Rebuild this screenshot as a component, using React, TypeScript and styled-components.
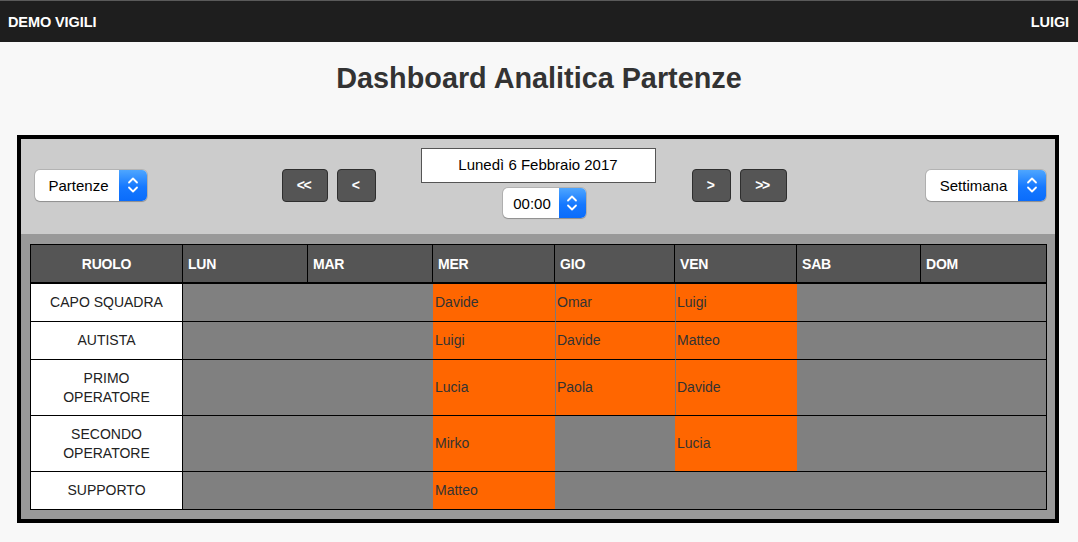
import React from "react";
import styled, { createGlobalStyle } from "styled-components";

const Global = createGlobalStyle`
  html, body { margin: 0; padding: 0; }
  body {
    background: #f8f8f8;
    font-family: "Liberation Sans", Arial, Helvetica, sans-serif;
    color: #333;
  }
`;

const TopBar = styled.header`
  height: 41px;
  background: #1e1e1e;
  border-top: 1px solid #5a5a5a;
  display: flex;
  align-items: center;
  justify-content: space-between;
  padding: 0 9px 0 8px;
`;

const Brand = styled.span`
  color: #fff;
  font-weight: bold;
  font-size: 14.5px;
  letter-spacing: -0.1px;
`;

const Title = styled.h1`
  margin: 0;
  padding: 19px 0 0;
  height: 58px;
  box-sizing: border-box;
  text-align: center;
  font-size: 28.8px;
  line-height: 34px;
  font-weight: bold;
  color: #333;
`;

const Frame = styled.section`
  margin: 35px 19px 0 17px;
  border: 4px solid #000;
  background: #999;
`;

const Toolbar = styled.div`
  background: #cccccc;
  height: 95px;
  box-sizing: border-box;
  display: grid;
  grid-template-columns: 1fr auto 1fr;
  align-items: center;
  padding: 10px 9px 16px 14px;
`;

const Side = styled.div<{ $end?: boolean }>`
  display: flex;
  justify-content: ${(p) => (p.$end ? "flex-end" : "flex-start")};
  margin-top: 3px;
`;

const SelectBox = styled.div<{ $w: number; $h: number; $shift?: number }>`
  width: ${(p) => p.$w}px;
  height: ${(p) => p.$h}px;
  margin-left: ${(p) => p.$shift ?? 0}px;
  box-sizing: border-box;
  display: flex;
  border-radius: 5px;
  background: #fff;
  box-shadow: 0 0 0 1px rgba(0, 0, 0, 0.12), 0 1px 1px rgba(0, 0, 0, 0.2);
  overflow: hidden;
`;

const SelectLabel = styled.span`
  flex: 1;
  display: flex;
  align-items: center;
  justify-content: center;
  font-size: 15px;
  color: #000;
  padding-left: 3px;
`;

const SelectArrow = styled.span<{ $w: number }>`
  width: ${(p) => p.$w}px;
  display: flex;
  align-items: center;
  justify-content: center;
  background: linear-gradient(#4ea6ff, #1578ff 55%, #0a6cfb);
`;

const Chevrons = () => (
  <svg width="12" height="20" viewBox="0 0 12 20">
    <path d="M2 7.5 L6 3.5 L10 7.5" fill="none" stroke="#fff" strokeWidth="1.8" strokeLinecap="round" strokeLinejoin="round" />
    <path d="M2 12.5 L6 16.5 L10 12.5" fill="none" stroke="#fff" strokeWidth="1.8" strokeLinecap="round" strokeLinejoin="round" />
  </svg>
);

const Select = ({
  label,
  w,
  h,
  arrow,
  shift,
}: {
  label: string;
  w: number;
  h: number;
  arrow: number;
  shift?: number;
}) => (
  <SelectBox $w={w} $h={h} $shift={shift}>
    <SelectLabel>{label}</SelectLabel>
    <SelectArrow $w={arrow}>
      <Chevrons />
    </SelectArrow>
  </SelectBox>
);

const Center = styled.div`
  display: flex;
  align-items: center;
  margin-right: 13px;
`;

const NavGroup = styled.div<{ $mr?: number; $ml?: number }>`
  display: flex;
  gap: 9px;
  margin-right: ${(p) => p.$mr ?? 0}px;
  margin-left: ${(p) => p.$ml ?? 0}px;
  margin-top: 3px;
`;

const NavButton = styled.button<{ $w: number }>`
  width: ${(p) => p.$w}px;
  height: 33px;
  background: #555;
  border: 1px solid #2e2e2e;
  border-radius: 4px;
  color: #fff;
  font-family: "Liberation Sans", Arial, sans-serif;
  font-weight: bold;
  font-size: 14px;
  letter-spacing: -1.5px;
  padding: 0 2px 0 0;
  display: flex;
  align-items: center;
  justify-content: center;
`;

const DateCol = styled.div`
  display: flex;
  flex-direction: column;
  align-items: center;
  gap: 5px;
  margin-top: -1px;
`;

const DateBox = styled.div`
  width: 235px;
  height: 35px;
  box-sizing: border-box;
  border: 1px solid #555;
  background: #fff;
  display: flex;
  align-items: center;
  justify-content: center;
  font-size: 15px;
  color: #000;
  padding-bottom: 3px;
`;

const TableArea = styled.div`
  padding: 10px 8px 9px 9px;
`;

const Grid = styled.table`
  width: 1017px;
  border-collapse: separate;
  border-spacing: 0;
  table-layout: fixed;
  border: 1px solid #000;
  background: #808080;
`;

const Head = styled.th<{ $center?: boolean; $last?: boolean }>`
  background: #555;
  color: #fff;
  font-size: 14px;
  font-weight: bold;
  text-align: ${(p) => (p.$center ? "center" : "left")};
  padding: 11px 5px 10px;
  line-height: 16px;
  border-right: ${(p) => (p.$last ? "none" : "1px solid #000")};
  border-bottom: 2px solid #000;
  letter-spacing: -0.2px;
`;

const Row = styled.tr<{ $first: boolean; $h: number }>`
  height: ${(p) => p.$h}px;
  & > td {
    border-top: ${(p) => (p.$first ? "none" : "1px solid #000")};
  }
`;

const RoleCell = styled.td`
  background: #fff;
  color: #222;
  text-align: center;
  font-size: 14px;
  line-height: 19px;
  padding: 0 4px;
  border-right: 1px solid #000;
`;

const DayCell = styled.td<{ $on: boolean; $sep: boolean }>`
  background: ${(p) => (p.$on ? "#ff6600" : "#808080")};
  color: #333;
  font-size: 14px;
  line-height: 19px;
  padding: 0 2px 0 ${(p) => (p.$sep ? 1 : 2)}px;
  border-left: ${(p) => (p.$sep ? "1px solid #7a7a7a" : "none")};
  text-align: left;
`;

const days = ["LUN", "MAR", "MER", "GIO", "VEN", "SAB", "DOM"];
const dayWidths = [125, 125, 122, 120, 122, 124, 125];

const rows: { role: string[]; h: number; cells: (string | null)[] }[] = [
  { role: ["CAPO SQUADRA"], h: 37, cells: [null, null, "Davide", "Omar", "Luigi", null, null] },
  { role: ["AUTISTA"], h: 38, cells: [null, null, "Luigi", "Davide", "Matteo", null, null] },
  { role: ["PRIMO", "OPERATORE"], h: 56, cells: [null, null, "Lucia", "Paola", "Davide", null, null] },
  { role: ["SECONDO", "OPERATORE"], h: 56, cells: [null, null, "Mirko", null, "Lucia", null, null] },
  { role: ["SUPPORTO"], h: 38, cells: [null, null, "Matteo", null, null, null, null] },
];

export default function App() {
  return (
    <>
      <Global />
      <TopBar>
        <Brand>DEMO VIGILI</Brand>
        <Brand>LUIGI</Brand>
      </TopBar>
      <Title>Dashboard Analitica Partenze</Title>
      <Frame>
        <Toolbar>
          <Side>
            <Select label="Partenze" w={112} h={31} arrow={28} />
          </Side>
          <Center>
            <NavGroup $mr={45}>
              <NavButton $w={46}>&lt;&lt;</NavButton>
              <NavButton $w={39}>&lt;</NavButton>
            </NavGroup>
            <DateCol>
              <DateBox>Lunedì 6 Febbraio 2017</DateBox>
              <Select label="00:00" w={83} h={30} arrow={27} shift={12} />
            </DateCol>
            <NavGroup $ml={36}>
              <NavButton $w={39}>&gt;</NavButton>
              <NavButton $w={47}>&gt;&gt;</NavButton>
            </NavGroup>
          </Center>
          <Side $end>
            <Select label="Settimana" w={120} h={31} arrow={28} />
          </Side>
        </Toolbar>
        <TableArea>
          <Grid>
            <colgroup>
              <col style={{ width: 152 }} />
              {dayWidths.map((w, i) => (
                <col key={i} style={{ width: w }} />
              ))}
            </colgroup>
            <thead>
              <tr>
                <Head $center>RUOLO</Head>
                {days.map((d, i) => (
                  <Head key={d} $last={i === days.length - 1}>
                    {d}
                  </Head>
                ))}
              </tr>
            </thead>
            <tbody>
              {rows.map((r, ri) => (
                <Row key={r.role.join(" ")} $first={ri === 0} $h={r.h}>
                  <RoleCell>
                    {r.role.map((l, i) => (
                      <React.Fragment key={l}>
                        {i > 0 && <br />}
                        {l}
                      </React.Fragment>
                    ))}
                  </RoleCell>
                  {r.cells.map((c, i) => (
                    <DayCell
                      key={i}
                      $on={c !== null}
                      $sep={c !== null && i > 0 && r.cells[i - 1] !== null}
                    >
                      {c ?? ""}
                    </DayCell>
                  ))}
                </Row>
              ))}
            </tbody>
          </Grid>
        </TableArea>
      </Frame>
    </>
  );
}
